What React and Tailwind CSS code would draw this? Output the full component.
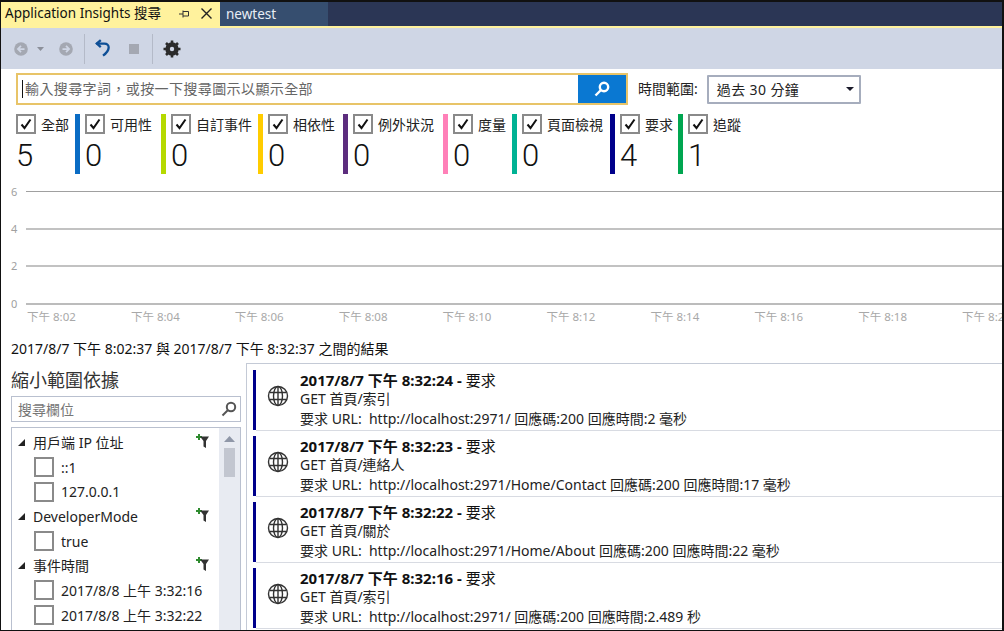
import React from "react";

const F = { fontFamily: '"Noto Sans","Noto Sans CJK TC",sans-serif' };

function Check({ checked = true, size = "w-[20px] h-[20px]" }) {
  return (
    <span className={`${size} shrink-0 border-2 border-[#8a8a8a] bg-white flex items-center justify-center`}>
      {checked && (
        <svg width="14" height="14" viewBox="0 0 14 14">
          <path d="M2.5 7.5 L5.5 11 L11.5 2.5" fill="none" stroke="#111" strokeWidth="2" />
        </svg>
      )}
    </span>
  );
}

function Filter({ label, count, color, w }) {
  return (
    <div className="flex shrink-0" style={{ width: w }}>
      {color ? <div className="w-[5px] h-[60px] shrink-0" style={{ background: color }} /> : null}
      <div className={color ? "pl-[5px]" : ""}>
        <div className="flex items-center gap-[5px] h-[20px]">
          <Check />
          <span className="text-[14px] text-[#222] whitespace-nowrap">{label}</span>
        </div>
        <div style={{ fontFamily: 'Roboto,sans-serif' }} className="text-[31px] leading-[38px] text-[#111] font-light mt-[3px]">{count}</div>
      </div>
    </div>
  );
}

function Globe() {
  return (
    <svg width="22" height="22" viewBox="0 0 22 22" fill="none" stroke="#333" strokeWidth="1.4">
      <circle cx="11" cy="11" r="9.5" />
      <ellipse cx="11" cy="11" rx="4.5" ry="9.5" />
      <path d="M2.5 7.5H19.5M2.5 14.5H19.5M11 1.5V20.5" />
    </svg>
  );
}

function Row({ time, path, url, ms }) {
  return (
    <div className="flex h-[60px] mb-[6px]">
      <div className="w-[3px] bg-[#00008b] shrink-0" />
      <div className="flex-1 relative flex border-b border-[#d8dbe2] h-[61px]">
        <div className="w-[44px] flex justify-center pt-[15px] shrink-0"><Globe /></div>
        <div className="text-[14px] text-[#222]">
          <div className="text-[15px] leading-[20px] text-[#111]"><b className="font-bold">2017/8/7 下午 {time} - </b>要求</div>
          <div className="leading-[18px]">GET 首頁/{path}</div>
          <div className="leading-[21px] whitespace-pre">要求 URL:  {url} 回應碼:200 回應時間:{ms}</div>
        </div>
      </div>
    </div>
  );
}

function Funnel() {
  return (
    <svg width="15" height="17" viewBox="0 0 15 17" className="absolute right-[3px] top-[2px]">
      <path d="M1 4h2V2h2v2h2v2H5v2H3V6H1z" fill="#2e8b2e" />
      <path d="M5 4.5H14L11 9V16L8.5 14.5V9Z" fill="#333" />
    </svg>
  );
}

function Group({ label }) {
  return (
    <div className="relative flex items-center h-[24.7px] text-[14px] text-[#222]">
      <svg width="9" height="9" viewBox="0 0 9 9" className="ml-[5px] mr-[7px]"><path d="M8 1V8H1Z" fill="#222" /></svg>
      <span className="whitespace-nowrap">{label}</span>
      <Funnel />
    </div>
  );
}

function Item({ label }) {
  return (
    <div className="flex items-center h-[24.7px] pl-[22px] gap-[7px] text-[14px] text-[#222]">
      <Check checked={false} />
      <span className="whitespace-nowrap">{label}</span>
    </div>
  );
}

const ticks = ["8:02", "8:04", "8:06", "8:08", "8:10", "8:12", "8:14", "8:16", "8:18", "8:20"];

export default function App() {
  return (
    <div style={F} className="w-[1004px] h-[631px] overflow-hidden bg-white border-l border-r-2 border-b border-[#111] flex flex-col">
      <div className="h-[28px] bg-[#2b3655] flex shrink-0 border-t-2 border-b-2 border-t-[#111] border-b-[#fff29d]">
        <div className="w-[219px] bg-[#fff29d] flex items-center pl-[4px] pb-[1px] text-[13.5px] text-[#111]">
          <span className="whitespace-nowrap">Application Insights 搜尋</span>
          <svg width="12" height="12" viewBox="0 0 12 12" className="ml-[17px]" fill="none" stroke="#333"><path d="M1 6H5M5 2.5V9.5M5 3.5H10.5V8H5" /></svg>
          <svg width="13" height="13" viewBox="0 0 13 13" className="ml-[10px]" fill="none" stroke="#222" strokeWidth="1.4"><path d="M1.5 1.5L11.5 11.5M11.5 1.5L1.5 11.5" /></svg>
        </div>
        <div className="w-[108px] bg-[#364e6f] flex items-center pl-[6px] text-[13.5px] text-[#e8edf5]">newtest</div>
      </div>

      <div className="h-[41px] bg-[#cfd6e5] flex items-center shrink-0 pl-[13px]">
        <svg width="14" height="14" viewBox="0 0 16 16"><circle cx="8" cy="8" r="7.8" fill="#a4a8b2" /><path d="M12 8H5M8 4.5L4.5 8L8 11.5" stroke="#cfd6e5" strokeWidth="2" fill="none" /></svg>
        <svg width="7" height="4" viewBox="0 0 7 4" className="ml-[9px]"><path d="M0 0H7L3.5 4Z" fill="#8c909a" /></svg>
        <svg width="14" height="14" viewBox="0 0 16 16" className="ml-[15px]"><circle cx="8" cy="8" r="7.8" fill="#a4a8b2" /><path d="M4 8H11M8 4.5L11.5 8L8 11.5" stroke="#cfd6e5" strokeWidth="2" fill="none" /></svg>
        <div className="w-px h-[30px] bg-[#b4bac8] ml-[11px]" />
        <svg width="16" height="19" viewBox="0 0 18 20" className="ml-[10px]" fill="none" stroke="#0e4f96" strokeWidth="2.6"><path d="M1.5 4.5H10.5C17 4.5 17.5 12 9 18" /><path d="M6.5 0.5L2 4.5L6.5 8.5" /></svg>
        <div className="w-[10px] h-[10px] bg-[#a4a8b2] ml-[18px]" />
        <div className="w-px h-[30px] bg-[#b4bac8] ml-[13px]" />
        <svg width="18" height="18" viewBox="0 0 18 18" className="ml-[10px]"><circle cx="9" cy="9" r="5" fill="none" stroke="#2b2b2b" strokeWidth="3.4" /><path d="M9 0.5V17.5M0.5 9H17.5M3 3L15 15M15 3L3 15" stroke="#2b2b2b" strokeWidth="2.6" /><circle cx="9" cy="9" r="2.2" fill="#cfd6e5" /></svg>
      </div>

      <div className="flex items-center h-[32px] mt-[4px] pl-[15px] shrink-0">
        <div className="w-[612px] h-[32px] border-2 border-[#e8c468] flex items-center">
          <div className="w-px h-[18px] bg-[#111] ml-[4px]" />
          <span className="flex-1 pl-[2px] pb-[2px] text-[14px] text-[#666] tracking-[0.4px]">輸入搜尋字詞，或按一下搜尋圖示以顯示全部</span>
          <div className="w-[48px] h-full bg-[#0a78d2] flex items-center justify-center">
            <svg width="16" height="16" viewBox="0 0 16 16" fill="none" stroke="#fff" strokeWidth="2.4"><circle cx="10" cy="6" r="4.2" /><path d="M7 9L1.5 14.5" /></svg>
          </div>
        </div>
        <span className="ml-[10px] pb-[1px] text-[14px] text-[#222] whitespace-nowrap">時間範圍:</span>
        <div className="ml-[9px] w-[154px] h-[29px] border-2 border-[#a6adbd] rounded-[1px] flex items-center pl-[8px] pr-[5px] text-[14px] text-[#222] justify-between">
          <span className="tracking-[0.4px]">過去 30 分鐘</span>
          <svg width="8" height="4" viewBox="0 0 8 4"><path d="M0 0H8L4 4Z" fill="#1a1a2a" /></svg>
        </div>
      </div>

      <div className="flex h-[60px] mt-[9px] pl-[15px] shrink-0">
        <Filter label="全部" count="5" w={59} />
        <Filter label="可用性" count="0" color="#0a6cc4" w={86} />
        <Filter label="自訂事件" count="0" color="#b5d900" w={97} />
        <Filter label="相依性" count="0" color="#ffcc00" w={85} />
        <Filter label="例外狀況" count="0" color="#5c2d7e" w={100} />
        <Filter label="度量" count="0" color="#ff80b8" w={69} />
        <Filter label="頁面檢視" count="0" color="#00b294" w={98} />
        <Filter label="要求" count="4" color="#00008b" w={68} />
        <Filter label="追蹤" count="1" color="#00a650" w={70} />
      </div>

      <svg width="1001" height="152" viewBox="0 0 1001 152" className="shrink-0 block mt-[6px]" style={{ fontFamily: F.fontFamily }}>
        {[[6, 11.5], [4, 49], [2, 86]].map(([n, y]) => (
          <g key={n}>
            <text x="10" y={y + 4} fontSize="11" fill="#a0a0a0">{n}</text>
            <line x1="25" x2="1001" y1={y} y2={y} stroke={n === 6 ? "#a0a0a0" : "#858585"} strokeWidth="1.2" />
          </g>
        ))}
        <text x="10" y="128" fontSize="11" fill="#a0a0a0">0</text>
        <line x1="25" x2="1001" y1="124" y2="124" stroke="#7a7a7a" strokeWidth="1.2" />
        {ticks.map((t, i) => (
          <text key={t} x={26 + i * 103.9} y="141" fontSize="11.5" fill="#a8a8a8">下午 {t}</text>
        ))}
      </svg>

      <div className="h-[26px] mt-[5px] pl-[10px] text-[14px] leading-[24px] text-[#111] whitespace-nowrap shrink-0">2017/8/7 下午 8:02:37 與 2017/8/7 下午 8:32:37 之間的結果</div>

      <div className="flex flex-1 min-h-0 pl-[10px]">
        <div className="w-[230px] shrink-0 flex flex-col pt-[5px]">
          <div className="text-[18px] leading-[24px] text-[#333]">縮小範圍依據</div>
          <div className="h-[26px] mt-[4px] border border-[#b9c0cf] flex items-center justify-between pl-[6px] pr-[3px] text-[14px] text-[#777]">
            <span>搜尋欄位</span>
            <svg width="16" height="16" viewBox="0 0 16 16" fill="none" stroke="#555" strokeWidth="2"><circle cx="10" cy="6" r="4.2" /><path d="M7 9L1.5 14.5" /></svg>
          </div>
          <div className="flex flex-1 min-h-0 mt-[5px] border border-[#b9c0cf] border-b-0 overflow-hidden">
            <div className="flex-1 pt-[2px] pr-[6px] min-w-0">
              <Group label="用戶端 IP 位址" />
              <Item label="::1" />
              <Item label="127.0.0.1" />
              <Group label="DeveloperMode" />
              <Item label="true" />
              <Group label="事件時間" />
              <Item label="2017/8/8 上午 3:32:16" />
              <Item label="2017/8/8 上午 3:32:22" />
            </div>
            <div className="w-[21px] shrink-0 bg-[#e8ebf2] flex flex-col items-center pt-[8px]">
              <svg width="11" height="6" viewBox="0 0 11 6"><path d="M0 6L5.5 0L11 6Z" fill="#8f97a8" /></svg>
              <div className="w-[11px] h-[29px] bg-[#c2c6d0] mt-[6px]" />
            </div>
          </div>
        </div>

        <div className="flex-1 min-w-0 ml-[5px] border-l border-t border-[#c4cad6] pl-[6px] pt-[6px] overflow-hidden">
          <Row time="8:32:24" path="索引" url="http://localhost:2971/" ms="2 毫秒" />
          <Row time="8:32:23" path="連絡人" url="http://localhost:2971/Home/Contact" ms="17 毫秒" />
          <Row time="8:32:22" path="關於" url="http://localhost:2971/Home/About" ms="22 毫秒" />
          <Row time="8:32:16" path="索引" url="http://localhost:2971/" ms="2.489 秒" />
        </div>
      </div>
    </div>
  );
}
